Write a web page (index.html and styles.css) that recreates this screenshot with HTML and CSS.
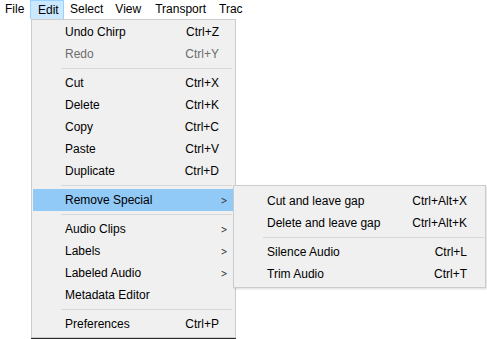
FILE: index.html
```html
<!DOCTYPE html>
<html lang="en">
<head>
    <meta charset="UTF-8">
    <title>Edit Menu</title>
    <link rel="stylesheet" href="styles.css">
</head>
<body>
    <div class="menubar">
        <span class="bar-item first">File</span>
        <span class="bar-item active">Edit</span>
        <span class="bar-item">Select</span>
        <span class="bar-item view">View</span>
        <span class="bar-item transport">Transport</span>
        <span class="bar-item last">Trac</span>
    </div>

    <div class="menu edit-menu">
        <div class="item"><span class="label">Undo Chirp</span><span class="key">Ctrl+Z</span></div>
        <div class="item disabled"><span class="label">Redo</span><span class="key">Ctrl+Y</span></div>
        <div class="sep"></div>
        <div class="item"><span class="label">Cut</span><span class="key">Ctrl+X</span></div>
        <div class="item"><span class="label">Delete</span><span class="key">Ctrl+K</span></div>
        <div class="item"><span class="label">Copy</span><span class="key">Ctrl+C</span></div>
        <div class="item"><span class="label">Paste</span><span class="key">Ctrl+V</span></div>
        <div class="item"><span class="label">Duplicate</span><span class="key">Ctrl+D</span></div>
        <div class="sep"></div>
        <div class="item has-sub open">
            <span class="label">Remove Special</span><span class="arrow">&gt;</span>
            <div class="menu submenu">
                <div class="item"><span class="label">Cut and leave gap</span><span class="key">Ctrl+Alt+X</span></div>
                <div class="item"><span class="label">Delete and leave gap</span><span class="key">Ctrl+Alt+K</span></div>
                <div class="sep"></div>
                <div class="item"><span class="label">Silence Audio</span><span class="key">Ctrl+L</span></div>
                <div class="item"><span class="label">Trim Audio</span><span class="key">Ctrl+T</span></div>
            </div>
        </div>
        <div class="sep"></div>
        <div class="item has-sub"><span class="label">Audio Clips</span><span class="arrow">&gt;</span></div>
        <div class="item has-sub"><span class="label">Labels</span><span class="arrow">&gt;</span></div>
        <div class="item has-sub"><span class="label">Labeled Audio</span><span class="arrow">&gt;</span></div>
        <div class="item"><span class="label">Metadata Editor</span></div>
        <div class="sep"></div>
        <div class="item"><span class="label">Preferences</span><span class="key">Ctrl+P</span></div>
    </div>
</body>
</html>
```

FILE: styles.css
```css
* {
    margin: 0;
    padding: 0;
    box-sizing: border-box;
}

body {
    font-family: 'Liberation Sans', Arial, sans-serif;
    font-size: 12px;
    color: #000;
    background-color: #fff;
    width: 487px;
    height: 339px;
    overflow: hidden;
    position: relative;
}

.menubar {
    display: flex;
    width: 240px;
    height: 19px;
    white-space: nowrap;
    background-color: #fff;
}

.bar-item {
    padding: 0 6px;
    line-height: 19px;
    flex-shrink: 0;
}

.bar-item.first {
    width: 30px;
    padding: 0 0 0 5px;
}

.bar-item.active {
    width: 34px;
    padding: 0 6px 0 7px;
    background-color: #cce8ff;
    border: 1px solid #99d1ff;
    border-bottom: none;
    line-height: 18px;
}

.bar-item.view {
    padding-right: 8px;
}

.bar-item.transport {
    padding-right: 7px;
}

.bar-item.last {
    padding-right: 0;
}

.menu {
    position: absolute;
    background-color: #f0f0f0;
    border: 1px solid #cccccc;
}

.edit-menu {
    left: 31px;
    top: 19px;
    width: 205px;
    padding: 1px 1px 2px 1px;
    box-shadow: 0 2px 0 #2b2b2b;
}

.item {
    display: flex;
    align-items: center;
    height: 22px;
    padding: 0 15px 0 32px;
    position: relative;
}

.item .label {
    flex: 1;
}

.item .key {
    text-align: right;
}

.item.disabled {
    color: #6d6d6d;
}

.item.has-sub {
    padding-right: 6px;
}

.arrow {
    font-family: 'DejaVu Sans', sans-serif;
    font-size: 10px;
    color: #333;
    transform: scaleX(0.8);
}

.item.open {
    background-color: #91c9f7;
}

.sep {
    height: 1px;
    margin: 3px 2px 3px 28px;
    background-color: #d7d7d7;
    box-sizing: content-box;
}

.submenu {
    left: 200px;
    top: -4px;
    width: 253px;
    padding: 4px 1px 2px 1px;
    box-shadow: 1px 1px 2px rgba(0, 0, 0, 0.15);
}

.submenu .item {
    padding-right: 17px;
}

.submenu .sep {
    margin-left: 28px;
    margin-right: 0;
}
```
